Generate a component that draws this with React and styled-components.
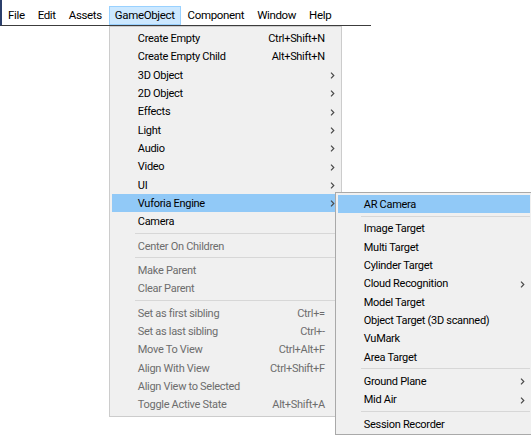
import React from 'react';
import styled, { createGlobalStyle } from 'styled-components';

const Global = createGlobalStyle`
  html, body { margin: 0; padding: 0; background: #ffffff; }
  body {
    font-family: Roboto, "Liberation Sans", sans-serif;
    font-size: 11px;
    letter-spacing: -0.3px;
    color: #000000;
  }
`;

const Screen = styled.div`
  position: relative;
  width: 531px;
  height: 435px;
  overflow: hidden;
  background: #ffffff;
`;

const MenuBar = styled.div`
  display: flex;
  align-items: flex-end;
  box-sizing: border-box;
  width: 371px;
  height: 26px;
  border-left: 2px solid #2b3f6b;
  border-bottom: 1px solid #3c3c3c;
  font-size: 11.5px;
  letter-spacing: -0.35px;
`;

const MenuTitle = styled.div`
  position: relative;
  box-sizing: border-box;
  height: 19px;
  padding: 0 5px;
  display: flex;
  align-items: center;
  line-height: 17px;
  border: 1px solid ${p => (p.$open ? '#99d1ff' : 'transparent')};
  background: ${p => (p.$open ? '#cce8ff' : 'transparent')};
  margin-right: 1px;
  white-space: nowrap;
`;

const Dropdown = styled.div`
  position: absolute;
  top: calc(100% + 2px);
  left: -1px;
  box-sizing: border-box;
  width: ${p => p.$width}px;
  padding: ${p => p.$pad};
  background: #f0f0f0;
  border: 1px solid ${p => p.$border};
  z-index: ${p => p.$z || 10};
  font-size: 11px;
  letter-spacing: -0.3px;
`;

const SubDropdown = styled(Dropdown)`
  top: -2px;
  left: calc(100% - 4px);
`;

const Row = styled.div`
  position: relative;
  display: grid;
  grid-template-columns: 1fr auto 14px;
  align-items: center;
  height: 18.33px;
  line-height: 18px;
  padding-left: 26px;
  padding-top: 1px;
  box-sizing: border-box;
  white-space: nowrap;
  color: ${p => (p.$disabled ? '#6d6d6d' : '#000000')};
  background: ${p => (p.$active ? '#91c9f7' : 'transparent')};
`;

const Label = styled.span``;

const Shortcut = styled.span`
  text-align: right;
`;

const ArrowCell = styled.span`
  display: flex;
  align-items: center;
  padding-left: ${p => p.$offset}px;
`;

const Separator = styled.div`
  height: 6px;
  display: flex;
  align-items: center;
  padding-left: 23px;
  &::after {
    content: '';
    flex: 1;
    height: 1px;
    background: #d7d7d7;
  }
`;

const Chevron = () => (
  <svg width="5" height="7" viewBox="0 0 5 7">
    <path d="M1 0.6 L3.8 3.5 L1 6.4" fill="none" stroke="#4a4a4a" strokeWidth="1.2" />
  </svg>
);

const Item = ({ label, shortcut, arrow, disabled, active, offset = 5, children }) => (
  <Row $disabled={disabled} $active={active}>
    <Label>{label}</Label>
    <Shortcut>{shortcut}</Shortcut>
    <ArrowCell $offset={offset}>{arrow && <Chevron />}</ArrowCell>
    {children}
  </Row>
);

const titles = ['File', 'Edit', 'Assets', 'GameObject', 'Component', 'Window', 'Help'];

const VuforiaMenu = () => (
  <SubDropdown $width={198} $pad="2px 2px 1px 2px" $border="#a9a9a9" $z={20}>
    <Item label="AR Camera" active offset={4} />
    <Separator />
    <Item label="Image Target" offset={4} />
    <Item label="Multi Target" offset={4} />
    <Item label="Cylinder Target" offset={4} />
    <Item label="Cloud Recognition" arrow offset={4} />
    <Item label="Model Target" offset={4} />
    <Item label="Object Target (3D scanned)" offset={4} />
    <Item label="VuMark" offset={4} />
    <Item label="Area Target" offset={4} />
    <Separator />
    <Item label="Ground Plane" arrow offset={4} />
    <Item label="Mid Air" arrow offset={4} />
    <Separator />
    <Item label="Session Recorder" offset={4} />
  </SubDropdown>
);

const GameObjectMenu = () => (
  <Dropdown $width={233} $pad="2px" $border="#cccccc">
    <Item label="Create Empty" shortcut="Ctrl+Shift+N" />
    <Item label="Create Empty Child" shortcut="Alt+Shift+N" />
    <Item label="3D Object" arrow />
    <Item label="2D Object" arrow />
    <Item label="Effects" arrow />
    <Item label="Light" arrow />
    <Item label="Audio" arrow />
    <Item label="Video" arrow />
    <Item label="UI" arrow />
    <Item label="Vuforia Engine" arrow active>
      <VuforiaMenu />
    </Item>
    <Item label="Camera" />
    <Separator />
    <Item label="Center On Children" disabled />
    <Separator />
    <Item label="Make Parent" disabled />
    <Item label="Clear Parent" disabled />
    <Separator />
    <Item label="Set as first sibling" shortcut="Ctrl+=" disabled />
    <Item label="Set as last sibling" shortcut="Ctrl+-" disabled />
    <Item label="Move To View" shortcut="Ctrl+Alt+F" disabled />
    <Item label="Align With View" shortcut="Ctrl+Shift+F" disabled />
    <Item label="Align View to Selected" disabled />
    <Item label="Toggle Active State" shortcut="Alt+Shift+A" disabled />
  </Dropdown>
);

export default function App() {
  return (
    <Screen>
      <Global />
      <MenuBar>
        {titles.map(t => (
          <MenuTitle key={t} $open={t === 'GameObject'}>
            {t}
            {t === 'GameObject' && <GameObjectMenu />}
          </MenuTitle>
        ))}
      </MenuBar>
    </Screen>
  );
}
